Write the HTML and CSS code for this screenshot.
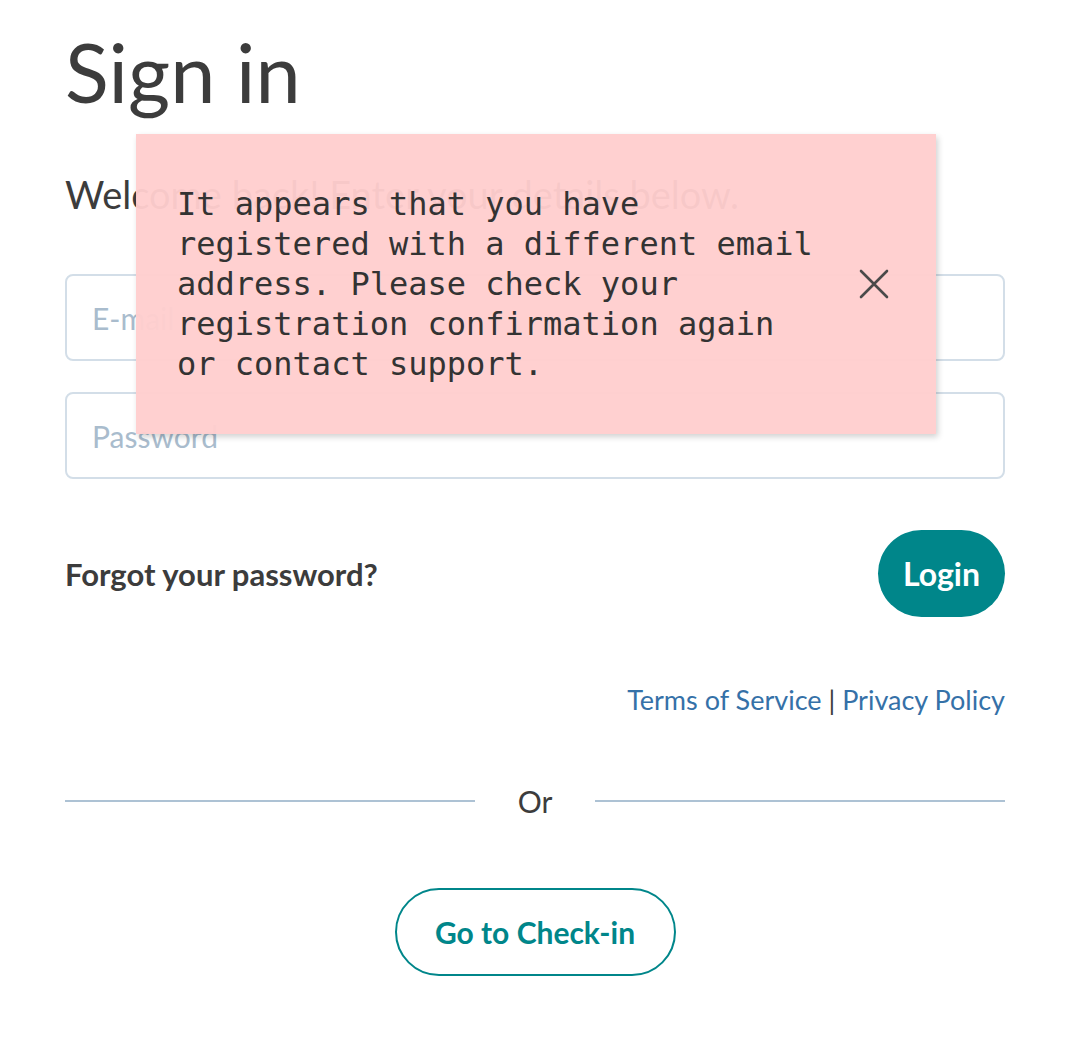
FILE: index.html
```html
<!DOCTYPE html>
<html lang="en">
<head>
    <meta charset="UTF-8">
    <meta name="viewport" content="width=device-width, initial-scale=1.0">
    <title>Sign in</title>
    <link rel="stylesheet" href="styles.css">
</head>
<body>

    <div class="container">
        <h1 class="title">Sign in</h1>
        <p class="welcome">Welcome back! Enter your details below.</p>

        <form class="login-form">
            <input type="email" class="field" placeholder="E-mail">
            <input type="password" class="field" placeholder="Password">

            <div class="form-row">
                <a href="#" class="forgot">Forgot your password?</a>
                <button type="submit" class="btn-login">Login</button>
            </div>
        </form>

        <div class="legal">
            <a href="#">Terms of Service</a> | <a href="#">Privacy Policy</a>
        </div>

        <div class="divider">
            <span class="line"></span>
            <span class="divider-text">Or</span>
            <span class="line"></span>
        </div>

        <div class="checkin">
            <a href="#" class="btn-outline">Go to Check-in</a>
        </div>
    </div>

    <!-- Error toast -->
    <div class="alert">
        <p class="alert-text">It appears that you have registered with a different email address. Please check your registration confirmation again or contact support.</p>
        <button class="alert-close" aria-label="Close">
            <svg width="30" height="30" viewBox="0 0 30 30">
                <path d="M2 2 L28 28 M28 2 L2 28" stroke="#4a4a4a" stroke-width="2.6" stroke-linecap="round" fill="none"/>
            </svg>
        </button>
    </div>

</body>
</html>
```

FILE: styles.css
```css
body {
    margin: 0;
    padding: 0;
    background-color: #fff;
    font-family: "Lato", "Open Sans", sans-serif;
    color: #3c3c3c;
}
.container {
    width: 940px;
    margin-left: 65px;
    padding-top: 22px;
}
.title {
    font-size: 81px;
    font-weight: 400;
    line-height: 100px;
    margin: 0;
    color: #3c3c3c;
}
.welcome {
    font-size: 38px;
    line-height: 50px;
    margin: 47px 0 0 0;
}
.login-form {
    margin-top: 55px;
}
.field {
    display: block;
    box-sizing: border-box;
    width: 100%;
    height: 87px;
    margin-bottom: 31px;
    padding: 0 25px;
    border: 2px solid #d3dee8;
    border-radius: 8px;
    font-family: inherit;
    font-size: 30px;
    color: #3c3c3c;
}
.field::placeholder {
    color: #a9bccd;
}
.form-row {
    display: flex;
    justify-content: space-between;
    align-items: center;
    margin-top: 51px;
}
.forgot {
    font-size: 31px;
    font-weight: 700;
    color: #3c3c3c;
    text-decoration: none;
}
.btn-login {
    height: 87px;
    padding: 0 25px;
    border: none;
    border-radius: 44px;
    background-color: #00868a;
    color: #fff;
    font-family: inherit;
    font-size: 32px;
    font-weight: 700;
    cursor: pointer;
}
.legal {
    margin-top: 63px;
    text-align: right;
    font-size: 27px;
    line-height: 40px;
    color: #3c3c3c;
}
.legal a {
    color: #3571a8;
    text-decoration: none;
}
.divider {
    display: flex;
    align-items: center;
    margin-top: 61px;
    height: 40px;
}
.divider .line {
    flex: 1;
    height: 2px;
    background-color: #adc2d4;
}
.divider-text {
    width: 120px;
    text-align: center;
    font-size: 30px;
}
.checkin {
    display: flex;
    justify-content: center;
    margin-top: 67px;
}
.btn-outline {
    display: flex;
    align-items: center;
    justify-content: center;
    box-sizing: border-box;
    width: 281px;
    height: 88px;
    border: 2px solid #00868a;
    border-radius: 44px;
    color: #00868a;
    font-size: 30px;
    font-weight: 700;
    text-decoration: none;
}
.alert {
    position: absolute;
    left: 136px;
    top: 134px;
    width: 800px;
    height: 300px;
    box-sizing: border-box;
    padding: 0 40px 0 41px;
    display: flex;
    align-items: center;
    justify-content: space-between;
    background-color: rgba(255, 206, 206, 0.96);
    box-shadow: 2px 3px 6px rgba(0, 0, 0, 0.18);
}
.alert-text {
    width: 645px;
    margin: 0;
    font-family: "DejaVu Sans Mono", monospace;
    font-size: 32px;
    line-height: 40px;
    color: #333;
}
.alert-close {
    background: none;
    border: none;
    padding: 0;
    margin-right: 7px;
    width: 30px;
    height: 30px;
    cursor: pointer;
}
```
